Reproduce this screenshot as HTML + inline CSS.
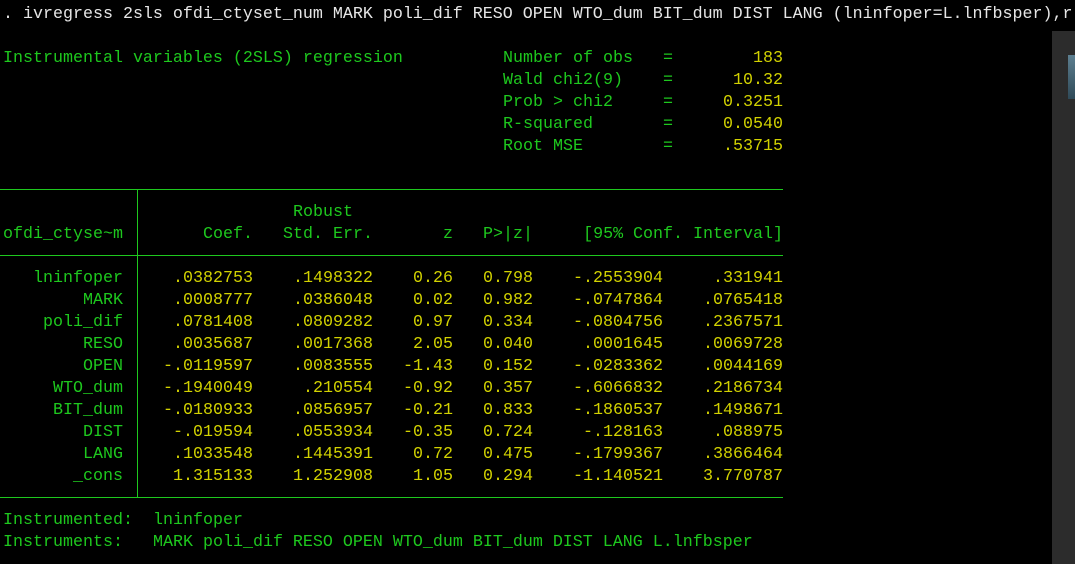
<!DOCTYPE html>
<html><head><meta charset="utf-8"><style>
html,body{margin:0;padding:0;background:#000;width:1075px;height:564px;overflow:hidden;position:relative}
.r{position:absolute;left:0;height:22px;line-height:22px;font-family:"Liberation Mono",monospace;font-size:16.67px;white-space:pre;width:1075px;margin-top:2px}
.r span{position:absolute;top:0;white-space:pre}
.g{color:#1ec81e}.y{color:#d2d200}.w{color:#e6e6e6}
.R{text-align:right}
.hl{position:absolute;left:0;width:783px;height:1px;background:#1ec81e}
.vl{position:absolute;left:137px;width:1px;top:189px;height:308px;background:#1ec81e}
</style></head><body>
<div class="r w" style="top:2px"><span style="left:3px">. ivregress 2sls ofdi_ctyset_num MARK poli_dif RESO OPEN WTO_dum BIT_dum DIST LANG (lninfoper=L.lnfbsper),r</span></div>

<div class="r" style="top:46px"><span class="g" style="left:3px">Instrumental variables (2SLS) regression</span><span class="g" style="left:503px">Number of obs</span><span class="g" style="left:663px">=</span><span class="y R" style="left:0;width:783px">183</span></div>
<div class="r" style="top:68px"><span class="g" style="left:503px">Wald chi2(9)</span><span class="g" style="left:663px">=</span><span class="y R" style="left:0;width:783px">10.32</span></div>
<div class="r" style="top:90px"><span class="g" style="left:503px">Prob &gt; chi2</span><span class="g" style="left:663px">=</span><span class="y R" style="left:0;width:783px">0.3251</span></div>
<div class="r" style="top:112px"><span class="g" style="left:503px">R-squared</span><span class="g" style="left:663px">=</span><span class="y R" style="left:0;width:783px">0.0540</span></div>
<div class="r" style="top:134px"><span class="g" style="left:503px">Root MSE</span><span class="g" style="left:663px">=</span><span class="y R" style="left:0;width:783px">.53715</span></div>

<div class="hl" style="top:189px"></div>
<div class="hl" style="top:255px"></div>
<div class="hl" style="top:497px"></div>
<div class="vl"></div>

<div class="r" style="top:200px"><span class="g" style="left:293px">Robust</span></div>
<div class="r" style="top:222px"><span class="g" style="left:3px">ofdi_ctyse~m</span><span class="g R" style="left:0;width:253px">Coef.</span><span class="g R" style="left:0;width:373px">Std. Err.</span><span class="g R" style="left:0;width:453px">z</span><span class="g R" style="left:0;width:533px">P&gt;|z|</span><span class="g R" style="left:0;width:783px">[95% Conf. Interval]</span></div>

<div class="r" style="top:266px"><span class="g R" style="left:0;width:123px">lninfoper</span><span class="y R" style="left:0;width:253px">.0382753</span><span class="y R" style="left:0;width:373px">.1498322</span><span class="y R" style="left:0;width:453px">0.26</span><span class="y R" style="left:0;width:533px">0.798</span><span class="y R" style="left:0;width:663px">-.2553904</span><span class="y R" style="left:0;width:783px">.331941</span></div>
<div class="r" style="top:288px"><span class="g R" style="left:0;width:123px">MARK</span><span class="y R" style="left:0;width:253px">.0008777</span><span class="y R" style="left:0;width:373px">.0386048</span><span class="y R" style="left:0;width:453px">0.02</span><span class="y R" style="left:0;width:533px">0.982</span><span class="y R" style="left:0;width:663px">-.0747864</span><span class="y R" style="left:0;width:783px">.0765418</span></div>
<div class="r" style="top:310px"><span class="g R" style="left:0;width:123px">poli_dif</span><span class="y R" style="left:0;width:253px">.0781408</span><span class="y R" style="left:0;width:373px">.0809282</span><span class="y R" style="left:0;width:453px">0.97</span><span class="y R" style="left:0;width:533px">0.334</span><span class="y R" style="left:0;width:663px">-.0804756</span><span class="y R" style="left:0;width:783px">.2367571</span></div>
<div class="r" style="top:332px"><span class="g R" style="left:0;width:123px">RESO</span><span class="y R" style="left:0;width:253px">.0035687</span><span class="y R" style="left:0;width:373px">.0017368</span><span class="y R" style="left:0;width:453px">2.05</span><span class="y R" style="left:0;width:533px">0.040</span><span class="y R" style="left:0;width:663px">.0001645</span><span class="y R" style="left:0;width:783px">.0069728</span></div>
<div class="r" style="top:354px"><span class="g R" style="left:0;width:123px">OPEN</span><span class="y R" style="left:0;width:253px">-.0119597</span><span class="y R" style="left:0;width:373px">.0083555</span><span class="y R" style="left:0;width:453px">-1.43</span><span class="y R" style="left:0;width:533px">0.152</span><span class="y R" style="left:0;width:663px">-.0283362</span><span class="y R" style="left:0;width:783px">.0044169</span></div>
<div class="r" style="top:376px"><span class="g R" style="left:0;width:123px">WTO_dum</span><span class="y R" style="left:0;width:253px">-.1940049</span><span class="y R" style="left:0;width:373px">.210554</span><span class="y R" style="left:0;width:453px">-0.92</span><span class="y R" style="left:0;width:533px">0.357</span><span class="y R" style="left:0;width:663px">-.6066832</span><span class="y R" style="left:0;width:783px">.2186734</span></div>
<div class="r" style="top:398px"><span class="g R" style="left:0;width:123px">BIT_dum</span><span class="y R" style="left:0;width:253px">-.0180933</span><span class="y R" style="left:0;width:373px">.0856957</span><span class="y R" style="left:0;width:453px">-0.21</span><span class="y R" style="left:0;width:533px">0.833</span><span class="y R" style="left:0;width:663px">-.1860537</span><span class="y R" style="left:0;width:783px">.1498671</span></div>
<div class="r" style="top:420px"><span class="g R" style="left:0;width:123px">DIST</span><span class="y R" style="left:0;width:253px">-.019594</span><span class="y R" style="left:0;width:373px">.0553934</span><span class="y R" style="left:0;width:453px">-0.35</span><span class="y R" style="left:0;width:533px">0.724</span><span class="y R" style="left:0;width:663px">-.128163</span><span class="y R" style="left:0;width:783px">.088975</span></div>
<div class="r" style="top:442px"><span class="g R" style="left:0;width:123px">LANG</span><span class="y R" style="left:0;width:253px">.1033548</span><span class="y R" style="left:0;width:373px">.1445391</span><span class="y R" style="left:0;width:453px">0.72</span><span class="y R" style="left:0;width:533px">0.475</span><span class="y R" style="left:0;width:663px">-.1799367</span><span class="y R" style="left:0;width:783px">.3866464</span></div>
<div class="r" style="top:464px"><span class="g R" style="left:0;width:123px">_cons</span><span class="y R" style="left:0;width:253px">1.315133</span><span class="y R" style="left:0;width:373px">1.252908</span><span class="y R" style="left:0;width:453px">1.05</span><span class="y R" style="left:0;width:533px">0.294</span><span class="y R" style="left:0;width:663px">-1.140521</span><span class="y R" style="left:0;width:783px">3.770787</span></div>

<div class="r" style="top:508px"><span class="g" style="left:3px">Instrumented:</span><span class="g" style="left:153px">lninfoper</span></div>
<div class="r" style="top:530px"><span class="g" style="left:3px">Instruments:</span><span class="g" style="left:153px">MARK poli_dif RESO OPEN WTO_dum BIT_dum DIST LANG L.lnfbsper</span></div>

<div style="position:absolute;left:1052px;top:31px;width:23px;height:533px;background:#2c2c2c"></div>
<div style="position:absolute;left:1068px;top:55px;width:7px;height:44px;background:linear-gradient(#5d7f90,#2f4a58)"></div>
</body></html>
